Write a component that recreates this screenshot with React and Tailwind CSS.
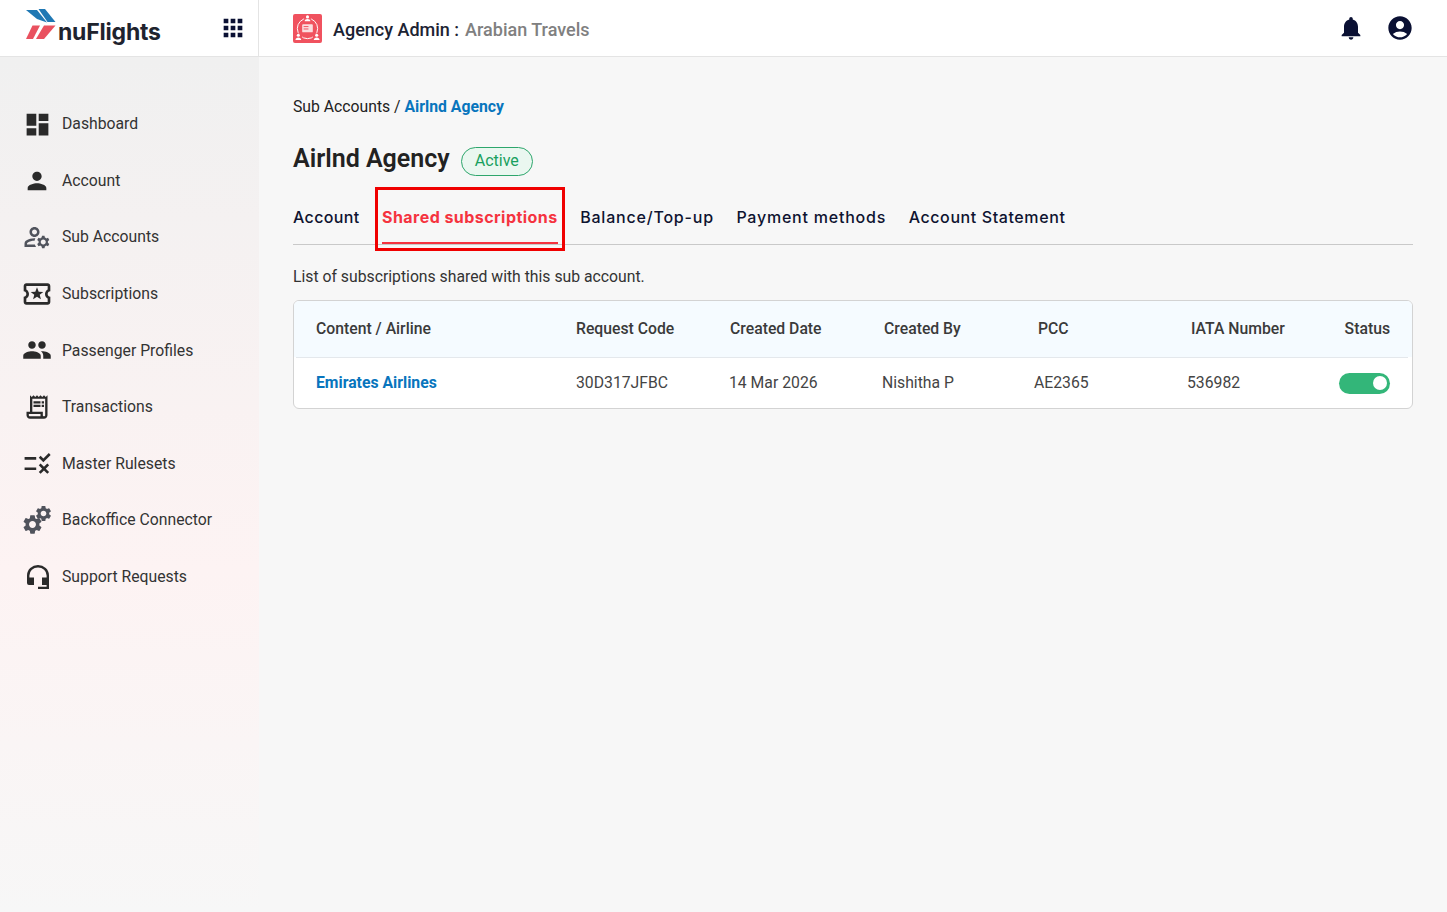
import React from 'react';
import {
  MdApps,
  MdNotifications,
  MdAccountCircle,
  MdDashboard,
  MdPerson,
  MdOutlineManageAccounts,
  MdOutlineLocalActivity,
  MdPeople,
  MdOutlineReceiptLong,
  MdRule,
  MdSettings,
} from 'react-icons/md';

const Logo = () => (
  <svg width="30" height="30" viewBox="0 0 30 30" className="shrink-0">
    <path d="M0 1h11l10 12.500-10-3.500z" fill="#1f78b4" />
    <path d="M12.500 0h6.500l10.500 13h-8z" fill="#1f78b4" />
    <path d="M6.500 16.500h7.500L7 30H0z" fill="#e9515f" />
    <path d="M18 16.500h11.500L18 30h-8z" fill="#e9515f" />
  </svg>
);

const AgencyIcon = () => (
  <svg width="29" height="29" viewBox="0 0 30 30" className="shrink-0 mt-[1px]">
    <rect width="30" height="30" rx="2" fill="#f0525f" />
    <circle cx="15" cy="15" r="10.500" fill="none" stroke="#fff" strokeWidth="1" />
    <rect x="9.500" y="10.500" width="11" height="8.500" rx="1" fill="#fbdde0" />
    <path d="M11 13h5M11 15.500h5" stroke="#f0525f" strokeWidth="1" />
    <rect x="11.500" y="1" width="7" height="6" rx="1" fill="#f0525f" />
    <circle cx="15" cy="3" r="1.600" fill="#fff" />
    <path d="M12 7.500c0-3 6-3 6 0z" fill="#fff" />
    <rect x="1.500" y="20" width="8" height="8" fill="#f0525f" />
    <circle cx="5.500" cy="22" r="1.600" fill="#fff" />
    <path d="M2.500 27c0-3.500 6-3.500 6 0z" fill="#fff" />
    <rect x="20.500" y="20" width="8" height="8" fill="#f0525f" />
    <circle cx="24.500" cy="22" r="1.600" fill="#fff" />
    <path d="M21.500 27c0-3.500 6-3.500 6 0z" fill="#fff" />
  </svg>
);

const GearsIcon = () => (
  <span className="relative block w-[30px] h-[30px] text-[#50535c]">
    <MdSettings size={23} className="absolute -left-[1px] -bottom-[1px]" />
    <MdSettings size={19} className="absolute -right-[1px] -top-[1px]" />
  </span>
);

const HeadsetIcon = () => (
  <svg width="23" height="24" viewBox="0 0 23 24" className="text-[#2a2a2a] ml-[3px] mt-[1px]">
    <path d="M1.200 13V10.500a9.800 9.300 0 0 1 19.600 0V23" fill="none" stroke="currentColor" strokeWidth="2.400" />
    <path d="M0 12.500h7V20H2a2 2 0 0 1-2-2zM15 12.500h7V20h-7zM11 21.800h11V24H11z" fill="currentColor" />
  </svg>
);

const menuItems = [
  { label: 'Dashboard', icon: <MdDashboard size={29} className="text-[#2a2a2a]" /> },
  { label: 'Account', icon: <MdPerson size={28} className="text-[#2a2a2a]" /> },
  { label: 'Sub Accounts', icon: <MdOutlineManageAccounts size={30} className="text-[#50535c]" /> },
  { label: 'Subscriptions', icon: <MdOutlineLocalActivity size={32} className="text-[#2a2a2a]" /> },
  { label: 'Passenger Profiles', icon: <MdPeople size={30} className="text-[#2a2a2a]" /> },
  { label: 'Transactions', icon: <MdOutlineReceiptLong size={28} className="text-[#2a2a2a]" /> },
  { label: 'Master Rulesets', icon: <MdRule size={31} className="text-[#2a2a2a]" /> },
  { label: 'Backoffice Connector', icon: <GearsIcon /> },
  { label: 'Support Requests', icon: <HeadsetIcon /> },
];

const tabs = [
  { label: 'Account', tracking: 'tracking-[0.35px]' },
  { label: 'Shared subscriptions', tracking: 'tracking-[0.45px]', active: true },
  { label: 'Balance/Top-up', tracking: 'tracking-[0.8px]' },
  { label: 'Payment methods', tracking: 'tracking-[0.78px]' },
  { label: 'Account Statement', tracking: 'tracking-[0.6px]' },
];

const App = () => {
  return (
    <div className="h-[912px] flex flex-col overflow-hidden bg-[#f7f7f7] text-[#333] font-['Roboto',sans-serif]">
      {/* Header */}
      <header className="h-[57px] shrink-0 flex items-stretch bg-white border-b border-[#e4e4e4]">
        <div className="w-[259px] shrink-0 flex items-center pl-[26px] pr-[11px] border-r border-[#e4e4e4]">
          <div className="flex items-start">
            <Logo />
            <span className="mt-[8px] ml-[2px] text-[23px] leading-[30px] font-bold tracking-[-0.2px] text-[#20232e] font-['Inter',sans-serif]">nuFlights</span>
          </div>
          <MdApps size={28} className="ml-auto text-[#0a1033]" />
        </div>
        <div className="flex-1 flex items-center pl-[34px] pr-[33px]">
          <AgencyIcon />
          <span className="ml-[11px] mt-[3px] text-lg text-[#1c2333] font-medium leading-none">Agency Admin :</span>
          <span className="ml-[6px] mt-[3px] text-lg text-[#808080] font-medium leading-none">Arabian Travels</span>
          <MdNotifications size={28} className="ml-auto text-[#0a1033]" />
          <MdAccountCircle size={28} className="ml-[21px] text-[#0a1033]" />
        </div>
      </header>

      <div className="flex-1 flex min-h-0">
        {/* Sidebar */}
        <aside className="w-[259px] shrink-0 pt-[38.800px] bg-gradient-to-b from-[#f0f0f0] via-[#fdf3f3] via-60% to-[#f7f7f7]">
          {menuItems.map((item) => (
            <div key={item.label} className="h-[56.600px] flex items-center">
              <span className="w-[62px] shrink-0 pl-[21px] pr-[9px] flex justify-center">{item.icon}</span>
              <span className="text-[15.750px] text-[#333]">{item.label}</span>
            </div>
          ))}
        </aside>

        {/* Main */}
        <main className="flex-1 px-[34px] pt-[38px]">
          <div className="text-[15.750px] leading-6 text-[#222]">
            Sub Accounts / <span className="font-bold text-[#0875bd]">Airlnd Agency</span>
          </div>
          <div className="mt-[22px] flex items-center">
            <h1 className="text-[25px] leading-[32px] font-semibold text-[#222]">Airlnd Agency</h1>
            <span className="ml-[11px] mt-[6px] h-[29px] px-[13px] pb-[1px] flex items-center rounded-full border border-[#2da66c] bg-[#eaf7f0] text-base text-[#18a05e]">Active</span>
          </div>

          <div className="mt-[18px] h-[51px] flex gap-[22.500px] border-b border-[#c9c9c9]">
            {tabs.map((tab) => (
              <div key={tab.label} className={tab.active ? 'relative h-[50px] pt-[11px] border-b-2 border-[#f5333f]' : 'pt-[11px]'}>
                <span className={`block text-base leading-6 font-['Inter',sans-serif] whitespace-nowrap ${tab.tracking} ${tab.active ? 'font-bold text-[#f5333f]' : 'font-medium text-[#0e1330]'}`}>
                  {tab.label}
                </span>
                {tab.active && (
                  <span className="absolute left-[-7px] right-[-7px] top-[-7px] bottom-[-9px] border-[3px] border-[#f00000]" />
                )}
              </div>
            ))}
          </div>

          <p className="mt-[20px] text-[15.750px] leading-6 text-[#333]">List of subscriptions shared with this sub account.</p>

          <div className="mt-[11px] h-[109px] rounded-md border border-[#d3d3d3] bg-white overflow-hidden text-[15.750px]">
            <div className="h-[56px] pl-[22px] pr-[22px] flex items-center bg-[#f5fbff] font-medium text-[#3a3a3a]">
              <span className="w-[260px]">Content / Airline</span>
              <span className="w-[154px]">Request Code</span>
              <span className="w-[154px]">Created Date</span>
              <span className="w-[154px]">Created By</span>
              <span className="w-[153px]">PCC</span>
              <span className="flex-1">IATA Number</span>
              <span>Status</span>
            </div>
            <div className="ml-[2px] mr-[4px] h-px bg-[#e4e8ec]" />
            <div className="h-[50px] pl-[22px] pr-[22px] flex items-center text-[#444]">
              <span className="w-[260px] font-bold text-[#0875bd]">Emirates Airlines</span>
              <span className="w-[153px]">30D317JFBC</span>
              <span className="w-[153px]">14 Mar 2026</span>
              <span className="w-[152px]">Nishitha P</span>
              <span className="w-[153px]">AE2365</span>
              <span className="flex-1">536982</span>
              <span className="w-[51px] h-[21px] rounded-full bg-[#33b679] flex items-center justify-end pr-[3px]">
                <span className="w-[14px] h-[14px] rounded-full bg-white" />
              </span>
            </div>
          </div>
        </main>
      </div>
    </div>
  );
};

export default App;
